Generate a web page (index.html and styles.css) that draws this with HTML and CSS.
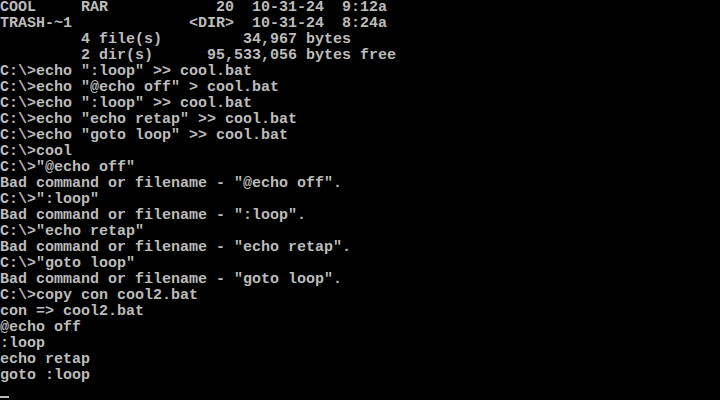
FILE: index.html
```html
<!DOCTYPE html>
<html lang="en">
    <head>
        <meta charset="UTF-8">
        <meta name="viewport" content="width=device-width, initial-scale=1.0">
        <title>MS-DOS</title>
        <link rel="stylesheet" href="styles.css">
    </head>
    <body>
        <!-- Console output, 80x25 text mode -->
        <div class="screen">
<pre class="output">COOL     RAR            20  10-31-24  9:12a
TRASH-~1             &lt;DIR&gt;  10-31-24  8:24a
         4 file(s)         34,967 bytes
         2 dir(s)      95,533,056 bytes free
C:\&gt;echo ":loop" &gt;&gt; cool.bat
C:\&gt;echo "@echo off" &gt; cool.bat
C:\&gt;echo ":loop" &gt;&gt; cool.bat
C:\&gt;echo "echo retap" &gt;&gt; cool.bat
C:\&gt;echo "goto loop" &gt;&gt; cool.bat
C:\&gt;cool
C:\&gt;"@echo off"
Bad command or filename - "@echo off".
C:\&gt;":loop"
Bad command or filename - ":loop".
C:\&gt;"echo retap"
Bad command or filename - "echo retap".
C:\&gt;"goto loop"
Bad command or filename - "goto loop".
C:\&gt;copy con cool2.bat
con =&gt; cool2.bat
@echo off
:loop
echo retap
goto :loop</pre>
            <!-- Cursor line -->
            <div class="input-line">
                <span class="cursor"></span>
            </div>
        </div>
    </body>
</html>
```

FILE: styles.css
```css
html, body {
    margin: 0;
    background-color: #000;
}

.screen {
    width: 720px;
    height: 400px;
    overflow: hidden;
    color: #bcbcbc;
    font-family: "Liberation Mono", "DejaVu Sans Mono", monospace;
    font-size: 15px;
    line-height: 16px;
}

.output {
    margin: 0;
    font: inherit;
    font-weight: bold;
    white-space: pre;
}

.input-line {
    height: 16px;
    display: flex;
    align-items: flex-end;
}

.cursor {
    width: 9px;
    height: 2px;
    margin-bottom: 2px;
    background-color: #bcbcbc;
}
```
